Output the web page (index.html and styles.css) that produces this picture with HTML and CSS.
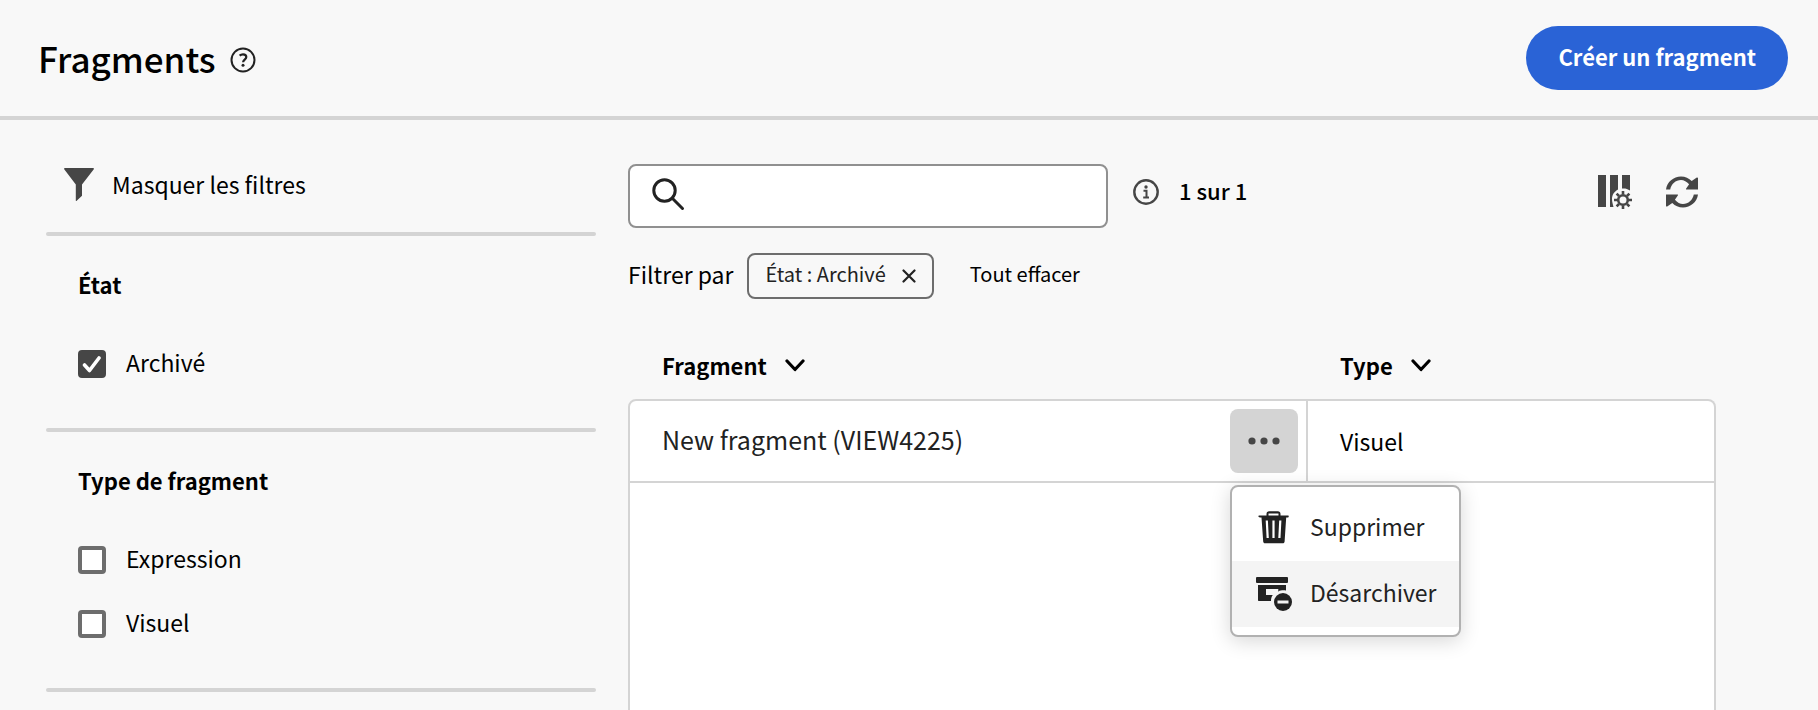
FILE: index.html
```html
<!DOCTYPE html>
<html lang="fr">
<head>
<meta charset="utf-8">
<title>Fragments</title>
<link rel="stylesheet" href="styles.css">
</head>
<body>
<header class="header">
  <h1 class="title">Fragments</h1>
  <button class="icon-btn help" type="button" aria-label="Aide">
    <svg width="26" height="26" viewBox="0 0 26 26" fill="none" stroke="#222" stroke-width="2"><circle cx="13" cy="13" r="11.5"/><path d="M9.6 8.6c1-.9 2.100-1.300 3.400-1.300 2 0 3.300 1 3.300 2.700 0 2.500-3.200 2.700-3.200 5.200" stroke-width="2.200"/><circle cx="13" cy="18.300" r="1.500" fill="#222" stroke="none"/></svg>
  </button>
  <button class="cta" type="button">Créer un fragment</button>
</header>
<div class="layout">
  <aside class="filters">
    <button class="toggle" type="button">
      <svg width="30" height="33" viewBox="0 0 30 33" fill="#464646"><path d="M.8 0h28.400a.8.8 0 0 1 .6 1.300L18 16.500v11.300L12.700 32.800c-.4.400-.9.100-.9-.4V16.500L.2 1.300A.8.8 0 0 1 .8 0z"/></svg>
      <span>Masquer les filtres</span>
    </button>
    <fieldset class="group">
      <legend class="group-title">État</legend>
      <label class="check"><input type="checkbox" checked><span class="label">Archivé</span></label>
    </fieldset>
    <fieldset class="group">
      <legend class="group-title">Type de fragment</legend>
      <label class="check"><input type="checkbox"><span class="label">Expression</span></label>
      <label class="check"><input type="checkbox"><span class="label">Visuel</span></label>
    </fieldset>
    <div class="rule"></div>
  </aside>
  <main class="content">
    <div class="toolbar">
      <label class="search">
        <svg width="33" height="33" viewBox="0 0 33 33" fill="none" stroke="#222" stroke-width="3"><circle cx="12.500" cy="12.500" r="10.700"/><path d="M20.300 20.300 30.500 30.500" stroke-linecap="round"/></svg>
        <input type="search" aria-label="Rechercher">
      </label>
      <div class="status">
        <svg width="26" height="26" viewBox="0 0 26 26" fill="none" stroke="#464646"><circle cx="13" cy="13" r="11.700" stroke-width="2.400"/><circle cx="13" cy="8" r="1.700" fill="#464646" stroke="none"/><path d="M10.500 11.800h3v6.400M10.200 18.500h5.800" stroke-width="2"/></svg>
        <span class="count label">1 sur 1</span>
      </div>
      <div class="actions">
        <button class="icon-btn" type="button" aria-label="Configurer les colonnes">
          <svg width="34" height="34" viewBox="0 0 34 34" fill="#464646"><path d="M0 0h8v32H0zM12 0h8v14.500c-3.500 1.800-6 5.300-6 9.500 0 3 1 5.800 1.500 8H12zM24 0h8v15.600c-2.500-1.900-5-2.400-8-2.100z"/><g fill="none" stroke="#464646"><circle cx="25" cy="25" r="4.800" stroke-width="2.600"/><path d="M25 19.500V16M25 30.500V34M19.500 25H16M30.500 25H34M21 21l-2.400-2.400M29 29l2.400 2.400M21 29l-2.400 2.400M29 21l2.400-2.400" stroke-width="2.600"/></g></svg>
        </button>
        <button class="icon-btn" type="button" aria-label="Actualiser">
          <svg width="32" height="32" viewBox="0 0 32 32" fill="#464646"><path d="M0 13.500C1 6 7.500.5 15 .5c4.300 0 8 1.800 10.700 4.600L30.800 1.500c.5-.3 1.200 0 1.200.6V13.500H20.500c-.5 0-.7-.7-.3-1l2.900-4.200C20.700 5.600 18 4 15 4 9.700 4 5.300 8 4.200 13.500z"/><path d="M32 18.500C31 26 24.500 31.500 17 31.500c-4.300 0-8-1.800-10.700-4.600L1.200 30.500c-.5.300-1.200 0-1.200-.6V18.500h11.500c.5 0 .7.700.3 1l-2.900 4.200C11.300 26.400 14 28 17 28c5.300 0 9.700-4 10.800-9.500z"/></svg>
        </button>
      </div>
    </div>
    <div class="applied">
      <span class="label">Filtrer par</span>
      <span class="tag"><span class="label">État : Archivé</span>
        <button class="icon-btn" type="button" aria-label="Retirer le filtre"><svg width="14" height="14" viewBox="0 0 14 14" stroke="#222" stroke-width="2.200" stroke-linecap="round"><path d="M1.500 1.500l11 11M12.500 1.500l-11 11"/></svg></button>
      </span>
      <button class="clear label" type="button">Tout effacer</button>
    </div>
    <table class="table">
      <thead>
        <tr>
          <th class="col-name" scope="col"><span class="head">Fragment <svg width="20" height="13" viewBox="0 0 20 13" fill="none" stroke="#000" stroke-width="3.200" stroke-linecap="round" stroke-linejoin="round"><path d="M2 2l8 8.500L18 2"/></svg></span></th>
          <th scope="col"><span class="head">Type <svg width="20" height="13" viewBox="0 0 20 13" fill="none" stroke="#000" stroke-width="3.200" stroke-linecap="round" stroke-linejoin="round"><path d="M2 2l8 8.500L18 2"/></svg></span></th>
        </tr>
      </thead>
      <tbody>
        <tr class="row">
          <td>
            <div class="name">
              <span class="label">New fragment (VIEW4225)</span>
              <div class="more-wrap">
                <button class="more" type="button" aria-label="Plus d’actions" aria-expanded="true">
                  <svg width="32" height="8" viewBox="0 0 32 8" fill="#464646"><circle cx="4" cy="4" r="3.600"/><circle cx="16" cy="4" r="3.600"/><circle cx="28" cy="4" r="3.600"/></svg>
                </button>
                <div class="menu" role="menu">
                  <button class="menu-item" type="button" role="menuitem">
                    <svg width="36" height="36" viewBox="0 0 36 36"><path fill="#222" fill-rule="evenodd" d="M3 5.500h7.500V4c0-1.800 1-2.700 2.700-2.700h8.600c1.700 0 2.700.9 2.700 2.700v1.500H32c.6 0 .7.400.7.900 0 .7-.4 1.100-1.200 1.100h-1.300L28.600 31.500c-.1 1.200-.8 1.800-1.800 1.800H9c-1 0-1.700-.6-1.800-1.800L5.500 7.500H4c-1 0-1.600-.5-1.600-1.200 0-.5.200-.8.600-.8zM12.500 5.500h10V3.400h-10z"/><path d="M10.800 10.500l.9 17.500M17.500 10.500V28M24.300 10.500 23.400 28" stroke="#fff" stroke-width="2.200"/></svg>
                    <span class="label">Supprimer</span>
                  </button>
                  <button class="menu-item is-hovered" type="button" role="menuitem">
                    <svg width="36" height="36" viewBox="0 0 36 36" fill="#222"><rect y="1" width="32" height="6" rx="1"/><path d="M2 9h28v5.500c-2-.4-3.600-.4-5.200.1l-1.500.2-1 .9V13H10v6h6.800c-1.300 1.600-1.800 3.500-1.800 6H3c-.6 0-1-.4-1-1z"/><circle cx="27" cy="26" r="9"/><rect x="21.500" y="24.500" width="11" height="3" fill="#f4f4f4"/></svg>
                    <span class="label">Désarchiver</span>
                  </button>
                </div>
              </div>
            </div>
          </td>
          <td>Visuel</td>
        </tr>
        <tr class="empty"><td colspan="2"></td></tr>
      </tbody>
    </table>
  </main>
</div>
</body>
</html>
```
FILE: styles.css
```css
* { box-sizing: border-box; }

body {
  margin: 0;
  height: 100vh;
  overflow: hidden;
  display: flex;
  flex-direction: column;
  background: #f8f8f8;
  color: #000;
  font-family: "Noto Sans CJK SC", "Open Sans", sans-serif;
  font-size: 23px;
  line-height: 32px;
}

svg { display: block; flex: none; }

button, input { font: inherit; color: inherit; }

button {
  margin: 0;
  padding: 0;
  border: 0;
  background: none;
  cursor: pointer;
}

.label { padding-bottom: 4px; }

.header {
  display: flex;
  align-items: center;
  flex: none;
  height: 120px;
  padding: 0 30px 0 38px;
  border-bottom: 4px solid #d4d4d4;
}

.title {
  margin: 0;
  font-size: 35px;
  font-weight: 500;
  line-height: 48px;
}

.help { margin: 4px 0 0 14px; }

.cta {
  height: 64px;
  margin-left: auto;
  padding: 0 32px 4px;
  border-radius: 32px;
  background: #2a63d6;
  color: #fff;
  font-weight: 700;
  font-size: 22px;
}

.layout {
  display: flex;
  flex: 1;
  gap: 32px;
  min-height: 0;
  padding: 0 102px 0 46px;
}

.filters { flex: none; width: 550px; }

.toggle {
  display: flex;
  align-items: center;
  gap: 18px;
  height: 112px;
  padding: 16px 18px 0;
}

.group {
  margin: 0;
  padding: 36px 32px 32px;
  border: 0;
  position: relative;
}

.rule,
.group::before {
  height: 4px;
  border-radius: 2px;
  background: #d4d4d4;
}

.group::before {
  content: "";
  position: absolute;
  inset: 0 0 auto;
}

.group-title {
  float: left;
  width: 100%;
  margin-bottom: 32px;
  padding: 0;
  font-size: 22px;
  font-weight: 700;
}

.check {
  display: flex;
  clear: both;
  align-items: center;
  gap: 20px;
  height: 64px;
}

.check input {
  appearance: none;
  width: 28px;
  height: 28px;
  margin: 0;
  border: 4px solid #6d6d6d;
  border-radius: 4px;
  background: #fff;
}

.check input:checked {
  border-color: #464646;
  background: #464646 url("data:image/svg+xml,%3Csvg xmlns='http://www.w3.org/2000/svg' viewBox='0 0 20 20'%3E%3Cpath d='M2.500 11l5 5.500L17 4' fill='none' stroke='white' stroke-width='3.600' stroke-linecap='round' stroke-linejoin='round'/%3E%3C/svg%3E") center / 20px no-repeat;
}

.content {
  display: flex;
  flex: 1;
  flex-direction: column;
  min-width: 0;
  padding-top: 44px;
}

.toolbar { display: flex; }

.search {
  display: flex;
  align-items: center;
  gap: 12px;
  width: 480px;
  height: 64px;
  padding: 0 22px 4px;
  border: 2px solid #909090;
  border-radius: 8px;
  background: #fff;
}

.search input {
  flex: 1;
  min-width: 0;
  border: 0;
  outline: 0;
  background: none;
}

.status,
.actions {
  display: flex;
  align-items: center;
  height: 56px;
}

.status { gap: 20px; margin-left: 25px; }

.count { font-size: 22px; font-weight: 500; }

.actions {
  gap: 34px;
  margin-left: auto;
  padding-right: 18px;
}

.applied {
  display: flex;
  align-items: center;
  gap: 14px;
  margin-top: 25px;
}

.tag {
  display: flex;
  align-items: center;
  gap: 16px;
  height: 46px;
  padding: 0 16px;
  border: 2px solid #6d6d6d;
  border-radius: 8px;
  color: #222;
  font-size: 20px;
}

.clear { margin-left: 22px; font-size: 20px; }

.table {
  flex: 1;
  width: 100%;
  margin-top: 36px;
  border-spacing: 0;
  table-layout: fixed;
}

.table th {
  height: 64px;
  padding: 0 32px 4px;
  font-size: 22px;
  font-weight: 700;
  text-align: left;
}

.table .col-name { width: 680px; padding-left: 34px; }

.head { display: flex; align-items: center; gap: 18px; }

.row td {
  height: 84px;
  padding: 0 32px;
  border: solid #d4d4d4;
  border-width: 2px 2px 2px 0;
  background: #fff;
}

.row td:first-child {
  padding-right: 8px;
  border-left-width: 2px;
  border-top-left-radius: 8px;
}

.row td:last-child { border-top-right-radius: 8px; }

.name {
  display: flex;
  align-items: center;
  justify-content: space-between;
  color: #222;
  font-size: 25px;
}

.more-wrap { position: relative; font-size: 23px; }

.more {
  display: grid;
  place-items: center;
  width: 68px;
  height: 64px;
  border-radius: 8px;
  background: #d4d4d4;
}

.menu {
  position: absolute;
  top: 76px;
  left: 0;
  min-width: 231px;
  padding: 8px 0;
  border: 2px solid #b1b1b1;
  border-radius: 8px;
  background: #fff;
  box-shadow: 0 4px 20px rgba(0, 0, 0, 0.16);
}

.menu-item {
  display: flex;
  align-items: center;
  gap: 18px;
  width: 100%;
  height: 66px;
  padding: 0 22px 0 24px;
  color: #222;
}

.is-hovered { background: #f4f4f4; }

.empty td {
  height: 100%;
  border: solid #d4d4d4;
  border-width: 0 2px;
  background: #fff;
}
```
